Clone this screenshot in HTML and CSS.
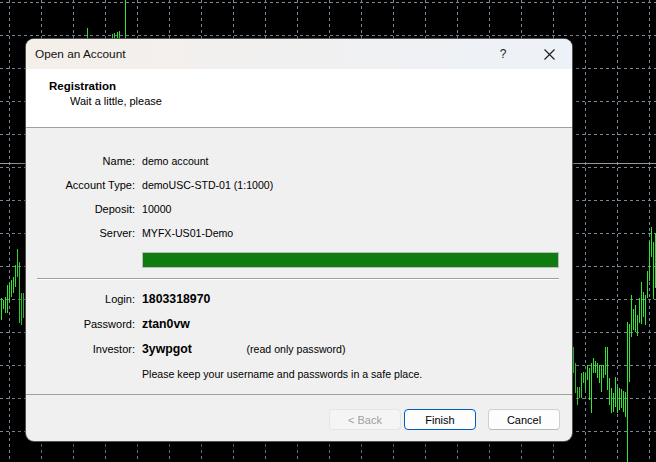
FILE: index.html
```html
<!DOCTYPE html>
<html>
<head>
<meta charset="utf-8">
<title>Open an Account</title>
<link rel="stylesheet" href="styles.css">
</head>
<body>
<div class="desk">
  <svg class="chart" width="656" height="462" viewBox="0 0 656 462">
    <rect width="656" height="462" fill="#000"/>
    <path class="grid-v" d="M9.5 0V462M41.5 0V462M73.5 0V462M105.5 0V462M137.5 0V462M169.5 0V462M201.5 0V462M233.5 0V462M265.5 0V462M297.5 0V462M329.5 0V462M361.5 0V462M393.5 0V462M425.5 0V462M457.5 0V462M489.5 0V462M521.5 0V462M553.5 0V462M585.5 0V462M617.5 0V462M649.5 0V462"/>
    <path class="grid-h" d="M0 2.5H656M0 35.5H656M0 68.5H656M0 101.5H656M0 134.5H656M0 167.5H656M0 200.5H656M0 233.5H656M0 266.5H656M0 299.5H656M0 332.5H656M0 365.5H656M0 398.5H656M0 431.5H656"/>
    <path class="price" d="M0 163.5H656"/>
    <path class="bars" d="M1.5 298V320M3.5 300V309M5.5 297V313M7.5 285V313M9.5 283V303M11.5 280V297M13.5 277V293M15.5 265V287M17.5 249V277M19.5 262V323M21.5 293V325M23.5 293V318
    M87.5 28V39M112.5 34V39M114.5 33V39M117.5 32V39M119.5 31V39M125.5 0V39
    M573.5 347V373M575.5 363V393M577.5 387V405M579.5 387V398M581.5 373V398M583.5 372V383M585.5 373V390M587.5 365V380M589.5 368V400M591.5 363V413M593.5 358V373M595.5 361V373M597.5 363V378M599.5 365V383M601.5 365V392M603.5 365V378M605.5 347V375M607.5 347V390M609.5 378V405M611.5 388V413M613.5 393V412M615.5 377V407M617.5 387V413M619.5 388V410M621.5 389V408M623.5 391V412M625.5 392V417M627.5 322V462M629.5 324V382M631.5 295V337M633.5 309V330M635.5 305V332M637.5 315V336M639.5 298V323M641.5 282V324M643.5 292V317M645.5 295V325M647.5 271V298M649.5 242V281M651.5 227V257M653.5 242V299M655.5 233V288"/>
  </svg>

  <div class="dialog">
    <div class="titlebar">
      <span class="title">Open an Account</span>
      <div class="caps">
        <span class="cap help">?</span>
        <span class="cap close">
          <svg width="11" height="11" viewBox="0 0 11 11"><path d="M0.5 0.5L10.5 10.5M10.5 0.5L0.5 10.5" stroke="#1a1a1a" stroke-width="1.1" fill="none"/></svg>
        </span>
      </div>
    </div>

    <div class="header">
      <div class="h-title">Registration</div>
      <div class="h-sub">Wait a little, please</div>
    </div>

    <div class="content">
      <div class="form info">
        <span class="label">Name:</span><span class="value">demo account</span>
        <span class="label">Account Type:</span><span class="value">demoUSC-STD-01 (1:1000)</span>
        <span class="label">Deposit:</span><span class="value">10000</span>
        <span class="label">Server:</span><span class="value">MYFX-US01-Demo</span>
      </div>
      <div class="progress"><div class="fill"></div></div>
      <div class="sep"></div>
      <div class="form creds">
        <span class="label">Login:</span><span class="value strong">1803318970</span>
        <span class="label">Password:</span><span class="value strong">ztan0vw</span>
        <span class="label">Investor:</span><span class="value"><span class="strong inv">3ywpgot</span><span>(read only password)</span></span>
        <span class="label"></span><span class="value">Please keep your username and passwords in a safe place.</span>
      </div>
    </div>

    <div class="footer">
      <span class="btn disabled">&lt; Back</span>
      <span class="btn primary">Finish</span>
      <span class="btn cancel">Cancel</span>
    </div>
  </div>
</div>
</body>
</html>
```

FILE: styles.css
```css
html, body {
  margin: 0;
  padding: 0;
  background: #000;
}

.desk {
  position: relative;
  width: 656px;
  height: 462px;
  overflow: hidden;
  font-family: "Liberation Sans", Arial, sans-serif;
  font-size: 10.6px;
  color: #000;
}

.chart {
  position: absolute;
  left: 0;
  top: 0;
  display: block;
}

.grid-v, .grid-h {
  stroke: #778899;
  stroke-width: 1;
  stroke-dasharray: 3 3;
  fill: none;
}

.price {
  stroke: #9a9a9a;
  stroke-width: 1;
  fill: none;
}

.bars {
  stroke: #33e633;
  stroke-width: 1;
  fill: none;
}

.dialog {
  position: absolute;
  left: 26px;
  top: 39px;
  width: 546px;
  height: 402px;
  border-radius: 8px;
  overflow: hidden;
  background: #f0f0f0;
  box-shadow: 0 0 0 1px rgba(90, 90, 90, 0.9), 0 6px 16px rgba(0, 0, 0, 0.6);
  display: flex;
  flex-direction: column;
}

.titlebar {
  height: 30px;
  flex: none;
  display: flex;
  align-items: center;
  background: linear-gradient(90deg, #f5efe9 0%, #f1f0f0 45%, #edf2f8 100%);
}

.title {
  padding-left: 9px;
  font-size: 11.8px;
  color: #111;
  flex: 1;
}

.caps {
  display: flex;
  height: 30px;
}

.cap {
  width: 46px;
  height: 30px;
  display: flex;
  align-items: center;
  justify-content: center;
}

.help {
  font-size: 12px;
  color: #1a1a1a;
}

.close svg {
  display: block;
}

.header {
  height: 58px;
  flex: none;
  background: #fff;
  border-bottom: 1px solid #a0a0a0;
  box-sizing: content-box;
}

.h-title {
  padding: 10px 0 0 23px;
  font-weight: bold;
  font-size: 11.5px;
  line-height: 15px;
}

.h-sub {
  padding-left: 44px;
  font-size: 11px;
  line-height: 15px;
}

.content {
  flex: none;
  box-sizing: border-box;
  padding-top: 21px;
  border-bottom: 1px solid #a0a0a0;
  height: 267px;
}

.form {
  display: grid;
  grid-template-columns: 109px 1fr;
  column-gap: 7px;
  align-items: center;
}

.info {
  grid-auto-rows: 24px;
}

.creds {
  grid-auto-rows: 25px;
  margin-top: 6px;
}

.label {
  text-align: right;
  white-space: nowrap;
  font-size: 11px;
}

.value {
  white-space: nowrap;
}

.strong {
  font-weight: bold;
  font-size: 12.3px;
}

.inv {
  display: inline-block;
  width: 104.5px;
}

.progress {
  margin: 7px 13px 0 116px;
  height: 16px;
  box-sizing: border-box;
  border: 1px solid #bcbcbc;
  background: #e6e6e6;
}

.fill {
  height: 100%;
  width: 100%;
  background: #107c10;
}

.sep {
  margin: 10px 13px 0 11px;
  border-top: 1px solid #a0a0a0;
  border-bottom: 1px solid #fff;
}

.footer {
  flex: 1;
  display: flex;
  justify-content: flex-end;
  align-items: flex-start;
  padding: 14px 12px 0 0;
}

.btn {
  width: 72px;
  height: 21px;
  box-sizing: border-box;
  border-radius: 4px;
  display: flex;
  align-items: center;
  justify-content: center;
  border: 1px solid #d0d0d0;
  border-bottom-color: #b9b9b9;
  background: #fdfdfd;
  color: #000;
  font-size: 11px;
}

.btn.disabled {
  background: #f5f5f5;
  border-color: #e5e5e5;
  color: #a0a0a0;
}

.btn.primary {
  margin-left: 3px;
  border-color: #005fb8;
}

.btn.cancel {
  margin-left: 12px;
}
```
